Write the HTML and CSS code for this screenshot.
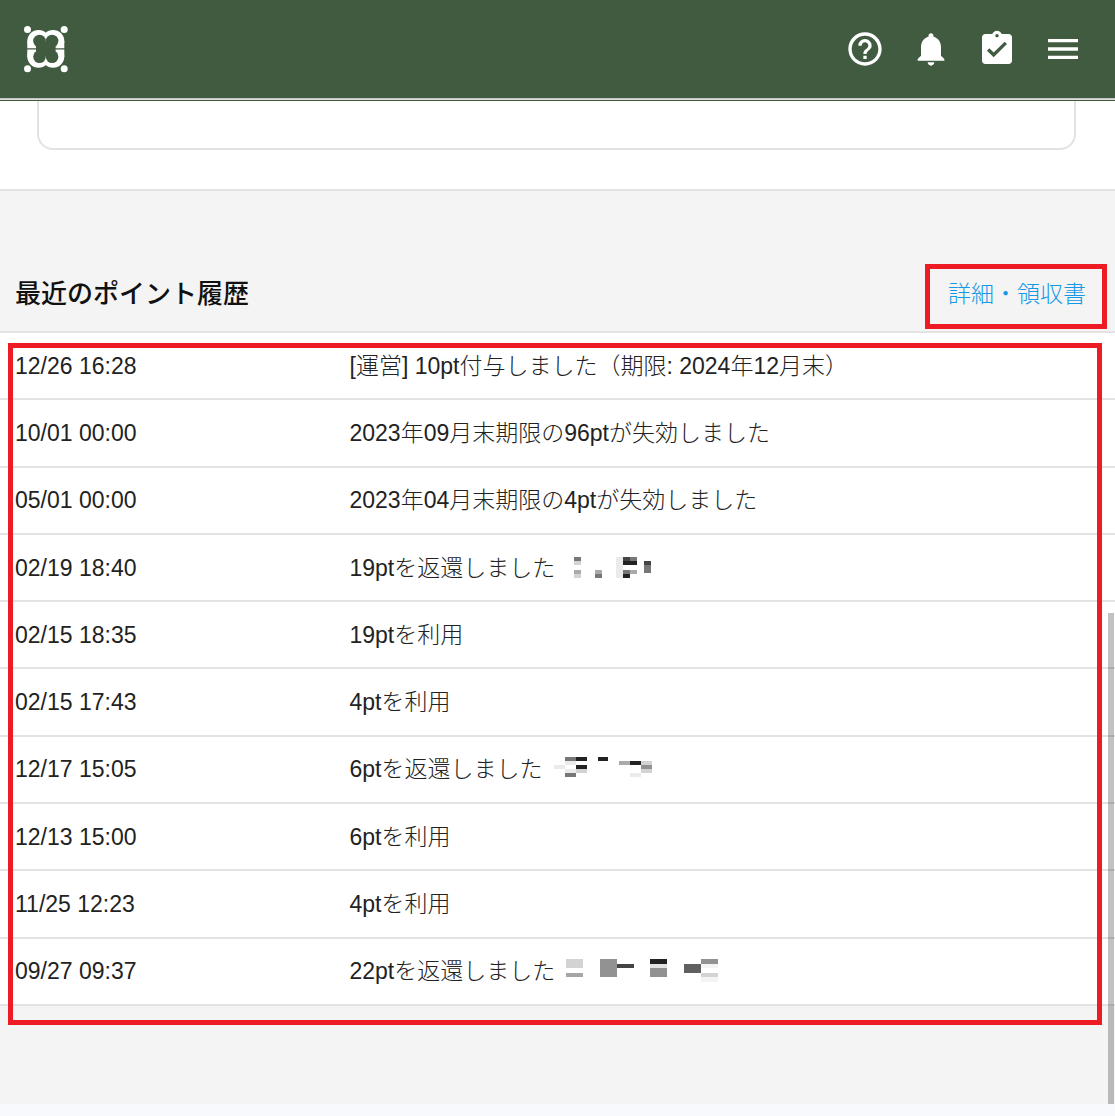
FILE: index.html
```html
<!DOCTYPE html>
<html lang="ja">
<head>
    <meta charset="UTF-8">
    <meta name="viewport" content="width=device-width, initial-scale=1.0">
    <title>最近のポイント履歴</title>
    <link rel="stylesheet" href="styles.css">
</head>
<body>
    <div class="page">
        <header class="header">
            <a class="logo" href="#" aria-label="ホーム">
                <svg width="46" height="48" viewBox="0 0 46 48">
                    <g fill="#fff">
                        <circle cx="4.500" cy="4.500" r="3.500"/>
                        <circle cx="41.200" cy="4.500" r="3.500"/>
                        <circle cx="4.500" cy="43.700" r="3.500"/>
                        <circle cx="41.200" cy="43.700" r="3.500"/>
                        <circle cx="15.500" cy="16.200" r="11.200"/>
                        <circle cx="30.100" cy="16.200" r="11.200"/>
                        <circle cx="15.500" cy="31.500" r="11.200"/>
                        <circle cx="30.100" cy="31.500" r="11.200"/>
                        <path d="M4.300 16H41.300V32H4.300z"/>
                    </g>
                    <g fill="#405b40">
                        <circle cx="16.500" cy="16" r="6.300"/>
                        <circle cx="29.100" cy="16" r="6.300"/>
                        <circle cx="16.500" cy="31.700" r="6.300"/>
                        <circle cx="29.100" cy="31.700" r="6.300"/>
                        <path d="M13 16.500H32.600V31.200H13zM3 23.300H43V24.600H3z"/>
                    </g>
                </svg>
            </a>
            <nav class="header-nav">
                <button class="icon-button" type="button" aria-label="ヘルプ">
                    <svg width="40" height="40" viewBox="0 0 24 24"><path d="M11 18h2v-2h-2v2zm1-16C6.480 2 2 6.480 2 12s4.480 10 10 10 10-4.480 10-10S17.520 2 12 2zm0 18c-4.410 0-8-3.590-8-8s3.590-8 8-8 8 3.590 8 8-3.590 8-8 8zm0-14c-2.210 0-4 1.790-4 4h2c0-1.100.9-2 2-2s2 .9 2 2c0 2-3 1.750-3 5h2c0-2.250 3-2.500 3-5 0-2.210-1.790-4-4-4z"/></svg>
                </button>
                <button class="icon-button" type="button" aria-label="お知らせ">
                    <svg width="40" height="40" viewBox="0 0 24 24"><path d="M12 22c1.100 0 2-.9 2-2h-4c0 1.100.89 2 2 2zm6-6v-5c0-3.070-1.640-5.640-4.500-6.320V4c0-.83-.67-1.500-1.500-1.500s-1.500.67-1.500 1.500v.68C7.630 5.360 6 7.920 6 11v5l-2 2v1h16v-1l-2-2z"/></svg>
                </button>
                <button class="icon-button" type="button" aria-label="やること">
                    <svg width="40" height="40" viewBox="0 0 24 24"><path d="M19 3h-4.180C14.400 1.840 13.300 1 12 1c-1.300 0-2.400.84-2.820 2H5c-1.100 0-2 .9-2 2v14c0 1.100.9 2 2 2h14c1.100 0 2-.9 2-2V5c0-1.100-.9-2-2-2zm-7 0c.55 0 1 .45 1 1s-.45 1-1 1-1-.45-1-1 .45-1 1-1zm-2 14l-4-4 1.410-1.410L10 14.170l6.590-6.590L18 9l-8 8z"/></svg>
                </button>
                <button class="icon-button" type="button" aria-label="メニュー">
                    <svg width="40" height="40" viewBox="0 0 24 24"><path d="M3 18h18v-2H3v2zm0-5h18v-2H3v2zm0-7v2h18V6H3z"/></svg>
                </button>
            </nav>
        </header>

        <section class="top-panel">
            <div class="card"></div>
        </section>

        <main class="history">
            <div class="history-header">
                <h1 class="history-title">最近のポイント履歴</h1>
                <a class="detail-link" href="#">詳細・領収書</a>
            </div>
            <div class="history-list">
                <table class="history-table">
                    <tbody>
                        <tr><td class="date">12/26 16:28</td><td>[運営] 10pt付与しました（期限: 2024年12月末）</td></tr>
                        <tr><td class="date">10/01 00:00</td><td>2023年09月末期限の96ptが失効しました</td></tr>
                        <tr><td class="date">05/01 00:00</td><td>2023年04月末期限の4ptが失効しました</td></tr>
                        <tr>
                            <td class="date">02/19 18:40</td>
                            <td>
                                <span class="entry">19ptを返還しました
                                    <svg class="mosaic" width="86" height="24" viewBox="0 0 86 24" shape-rendering="crispEdges">
                                        <path fill="#777" d="M9 1h7v4H9zM30 18h7v4h-7zM79 9h7v8h-7zM65 1h7v4h-7zM58 14h7v4h-7z"/>
                                        <path fill="#d3d3d3" d="M9 5h7v4H9zM9 18h7v4H9z"/>
                                        <path fill="#aaa" d="M9 14h7v4H9zM30 14h7v4h-7zM65 14h7v4h-7z"/>
                                        <path fill="#ebebeb" d="M51 1h7v21h-7z"/>
                                        <path fill="#444" d="M58 1h7v4h-7zM79 5h7v4h-7z"/>
                                        <path fill="#222" d="M58 5h14v4H58zM58 18h7v4h-7z"/>
                                    </svg>
                                </span>
                            </td>
                        </tr>
                        <tr><td class="date">02/15 18:35</td><td>19ptを利用</td></tr>
                        <tr><td class="date">02/15 17:43</td><td>4ptを利用</td></tr>
                        <tr>
                            <td class="date">12/17 15:05</td>
                            <td>
                                <span class="entry">6ptを返還しました
                                    <svg class="mosaic" width="100" height="24" viewBox="0 0 100 24" shape-rendering="crispEdges">
                                        <path fill="#777" d="M13 0h11v4H13zM13 16h11v4H13z"/>
                                        <path fill="#222" d="M24 0h11v4H24zM24 8h11v4H24zM46 0h10v4H46zM78 4h11v4H78z"/>
                                        <path fill="#ebebeb" d="M13 4h11v4H13zM2 8h11v4H2zM13 12h11v4H13zM78 16h11v4H78z"/>
                                        <path fill="#d3d3d3" d="M24 12h11v4H24zM89 4h11v4H89zM89 12h11v4H89z"/>
                                        <path fill="#aaa" d="M67 4h11v4H67z"/>
                                        <path fill="#929292" d="M89 8h11v4H89z"/>
                                    </svg>
                                </span>
                            </td>
                        </tr>
                        <tr><td class="date">12/13 15:00</td><td>6ptを利用</td></tr>
                        <tr><td class="date">11/25 12:23</td><td>4ptを利用</td></tr>
                        <tr>
                            <td class="date">09/27 09:37</td>
                            <td>
                                <span class="entry">22ptを返還しました
                                    <svg class="mosaic" width="154" height="24" viewBox="0 0 154 24" shape-rendering="crispEdges">
                                        <path fill="#d3d3d3" d="M1 0h17v9H1zM136 14h17v4h-17z"/>
                                        <path fill="#a6a6a6" d="M1 14h17v4H1z"/>
                                        <path fill="#929292" d="M35 0h17v18H35zM85 9h17v9H85zM136 0h17v5h-17z"/>
                                        <path fill="#444" d="M52 5h17v4H52z"/>
                                        <path fill="#222" d="M85 0h17v5H85z"/>
                                        <path fill="#e3e3e3" d="M85 5h17v4H85z"/>
                                        <path fill="#606060" d="M119 5h17v9h-17z"/>
                                        <path fill="#f4f4f4" d="M136 5h17v4h-17zM136 18h17v5h-17z"/>
                                    </svg>
                                </span>
                            </td>
                        </tr>
                    </tbody>
                </table>
            </div>
            <div class="scroll-thumb"></div>
        </main>
    </div>
</body>
</html>
```

FILE: styles.css
```css
* {
    box-sizing: border-box;
}
body {
    margin: 0;
    background: #f8f9fd;
    color: #222;
    font-family: "Liberation Sans", "Noto Sans CJK JP", sans-serif;
    font-size: 23px;
    font-weight: 300;
    line-height: 32px;
}
.page {
    display: flex;
    flex-direction: column;
    min-height: 100vh;
    padding-bottom: 12px;
}

/* Header */
.header {
    display: flex;
    align-items: center;
    justify-content: space-between;
    height: 101px;
    padding: 0 32px 3px 23px;
    background: linear-gradient(#405b40 98px, #b9b9b9 98px, #e6e6e6 100px, #405b40 100px);
}
.logo,
.icon-button {
    display: flex;
}
.header-nav {
    display: flex;
    gap: 26px;
}
.icon-button {
    padding: 0;
    border: 0;
    background: none;
    cursor: pointer;
}
.icon-button svg {
    fill: #fff;
}

/* Bottom of the card above the history */
.top-panel {
    padding: 0 39px 39px 37px;
    background: #fff;
    border-bottom: 2px solid #e3e3e3;
}
.card {
    height: 49px;
    border: 2px solid #e2e2e2;
    border-top: 0;
    border-radius: 0 0 16px 16px;
}

/* Point history */
.history {
    position: relative;
    flex: 1;
    padding-top: 73px;
    background: #f4f4f4;
}
.history-header {
    display: flex;
    align-items: flex-start;
    justify-content: space-between;
    padding: 0 8px 2px 15px;
}
.history-title {
    margin: 0;
    padding-top: 14px;
    color: #111;
    font-size: 26px;
    font-weight: 500;
    line-height: 32px;
}
.detail-link {
    padding: 9px 16px 14px 18px;
    border: 5px solid #ed1c24;
    color: #1499e5;
    text-decoration: none;
}
.history-list {
    position: relative;
}
/* Red frame round the list */
.history-list::after {
    content: "";
    position: absolute;
    inset: 12px 13px -19px 8px;
    border: 5px solid #ed1c24;
    pointer-events: none;
}
.history-table {
    width: 100%;
    height: 675px;
    border-collapse: collapse;
    border-top: 2px solid #e3e3e3;
    background: #fff;
}
.history-table tr {
    border-bottom: 2px solid #e3e3e3;
}
.history-table td {
    padding: 0 15px;
    vertical-align: middle;
}
.history-table .date {
    width: 30%;
    min-width: 180px;
}
.entry {
    display: flex;
    align-items: center;
    gap: 10px;
}
.scroll-thumb {
    position: absolute;
    right: 1px;
    bottom: 0;
    width: 6px;
    height: 491px;
    background: rgba(0, 0, 0, 0.24);
}
```
